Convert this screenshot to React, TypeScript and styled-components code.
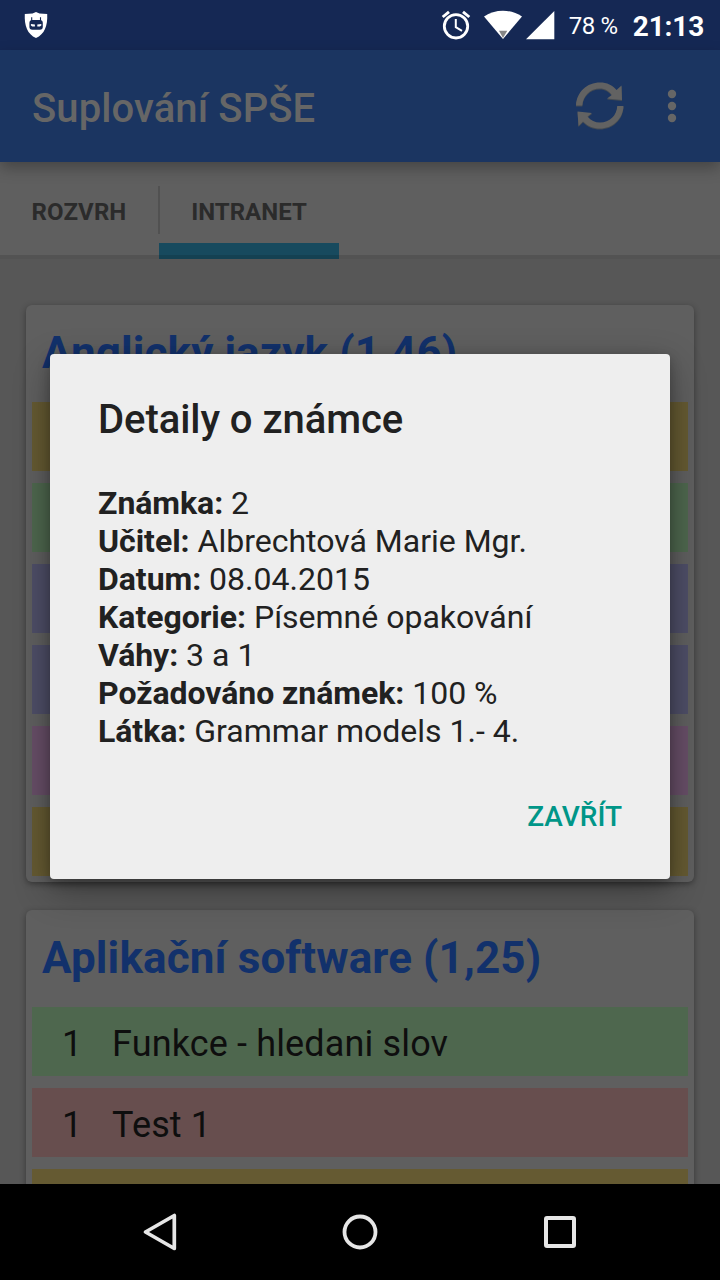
import React from "react";
import styled, { createGlobalStyle } from "styled-components";

const GlobalStyle = createGlobalStyle`
  * { box-sizing: border-box; }
  body { margin: 0; background: #000; font-family: Roboto, sans-serif; }
`;

const Screen = styled.div`
  position: relative;
  display: flex;
  flex-direction: column;
  width: 720px;
  height: 1280px;
  overflow: hidden;
  background: #575757;
`;

const StatusBar = styled.header`
  display: flex;
  align-items: center;
  height: 50px;
  flex: none;
  padding: 0 16px 0 24px;
  background: #152854;
  color: #fff;
`;

const StatusIcons = styled.div`
  display: flex;
  margin-left: auto;
  margin-right: 14px;
  svg { display: block; }
`;

const Battery = styled.span`
  font-size: 24px;
  line-height: 50px;
  padding-top: 2px;
  margin-right: 15px;
  letter-spacing: -0.35px;
  white-space: nowrap;
`;

const Clock = styled.span`
  font-size: 28px;
  font-weight: 700;
  line-height: 50px;
  padding-top: 3px;
  letter-spacing: -0.2px;
`;

const AppBar = styled.div`
  position: relative;
  display: flex;
  align-items: center;
  height: 112px;
  flex: none;
  padding: 0 32px;
  background: #1b3561;
  box-shadow: 0 6px 14px rgba(0, 0, 0, 0.28);
  z-index: 1;
  svg { display: block; }
`;

const AppTitle = styled.h1`
  flex: 1;
  margin: 6px 0 0;
  font-size: 40px;
  font-weight: 500;
  line-height: 48px;
  letter-spacing: 0.1px;
  color: #666;
`;

const TabBar = styled.nav`
  display: flex;
  height: 97px;
  flex: none;
  background: linear-gradient(#5f5f5f 93px, #535353 93px);
`;

const Tab = styled.div<{ $active?: boolean }>`
  display: flex;
  align-items: center;
  justify-content: center;
  width: ${(p) => (p.$active ? "180px" : "158px")};
  padding-top: 3px;
  font-size: 24px;
  font-weight: 700;
  letter-spacing: ${(p) => (p.$active ? "0" : "0.1px")};
  color: #2b2b2b;
  margin-left: ${(p) => (p.$active ? "-1px" : "0")};
  background: ${(p) =>
    p.$active
      ? "linear-gradient(transparent 81px, #174a5e 81px, #174a5e 93px, #144152 93px)"
      : "none"};
`;

const TabDivider = styled.div`
  width: 2px;
  height: 48px;
  margin-top: 24px;
  background: #515151;
`;

const Content = styled.main`
  display: flex;
  flex-direction: column;
  gap: 28px;
  flex: 1;
  min-height: 0;
  overflow: hidden;
  padding: 46px 26px 0;
`;

const Card = styled.section`
  display: flex;
  flex-direction: column;
  flex: none;
  gap: 12px;
  padding: 0 6px 6px;
  border-radius: 6px;
  background: #5f5f5f;
  box-shadow: 0 2px 6px rgba(0, 0, 0, 0.38);
`;

const CardTitle = styled.h2`
  height: 85px;
  margin: 0;
  padding: 0 10px;
  font-size: 44px;
  font-weight: 700;
  line-height: 96px;
  letter-spacing: 0.12px;
  white-space: nowrap;
  color: #12316b;
`;

const rowColors = {
  yellow: "#655a32",
  green: "#4e674e",
  blue: "#4e4e67",
  pink: "#674e67",
  red: "#674e4e",
};

const GradeRow = styled.div<{ $tone: keyof typeof rowColors }>`
  display: flex;
  align-items: center;
  height: 69px;
  padding: 4px 30px 0;
  background: ${(p) => rowColors[p.$tone]};
  font-size: 36px;
  line-height: 44px;
  letter-spacing: 0.15px;
  color: #0e0e0e;
`;

const Grade = styled.span`
  width: 50px;
`;

const NavBar = styled.footer`
  display: flex;
  flex: none;
  justify-content: center;
  gap: 104px;
  height: 96px;
  background: #000;
  svg { display: block; }
`;

const Dialog = styled.div`
  position: absolute;
  z-index: 2;
  left: 50px;
  top: 354px;
  display: flex;
  flex-direction: column;
  width: 620px;
  height: 525px;
  padding: 41px 48px;
  border-radius: 4px;
  background: #eee;
  color: #212121;
  box-shadow: 0 12px 36px rgba(0, 0, 0, 0.32), 0 4px 12px rgba(0, 0, 0, 0.26);
`;

const DialogTitle = styled.h2`
  margin: 0 0 39px;
  font-size: 40px;
  font-weight: 500;
  line-height: 50px;
  letter-spacing: -0.06px;
`;

const Details = styled.div`
  font-size: 32px;
  line-height: 38px;
  white-space: nowrap;
  b { letter-spacing: -0.04px; }
`;

const CloseButton = styled.button`
  align-self: flex-end;
  margin: 48px 0 0;
  padding: 0;
  border: 0;
  background: none;
  font: 500 28px/38px Roboto, sans-serif;
  color: #009688;
`;

const details = [
  ["Známka:", "2"],
  ["Učitel:", "Albrechtová Marie Mgr."],
  ["Datum:", "08.04.2015"],
  ["Kategorie:", "Písemné opakování"],
  ["Váhy:", "3 a 1"],
  ["Požadováno známek:", "100 %"],
  ["Látka:", "Grammar models 1.- 4."],
];

const firstCardRows: (keyof typeof rowColors)[] = [
  "yellow", "green", "blue", "blue", "pink", "yellow",
];

const ShieldIcon = () => (
  <svg width="24" height="28" viewBox="0 -1.8 24 28">
    <path d="M12 -0.7L15.5 .8 23.2 1.2C23.8 13 20.5 21.5 12 25.2 3.5 21.5 .2 13 .8 1.2L8.5 .8z" fill="#fff" />
    <path d="M7.7 4.4v4M16.5 4.4v4" stroke="#152854" strokeWidth="1.1" />
    <rect x="5.4" y="7.2" width="13.4" height="9.8" rx="3" fill="#152854" />
    <path d="M6.9 11.2l4 .4v2H8.3l-1.4-.8zM17.3 11.2l-4 .4v2h2.6l1.4-.8z" fill="#fff" />
  </svg>
);

const SignalIcons = () => (
  <svg width="114" height="50" viewBox="441 0 114 50">
    <g fill="none" stroke="#fff">
      <circle cx="456" cy="26.3" r="11.7" strokeWidth="2.8" />
      <path d="M442.7 17l6.3-5.2M469.3 17l-6.3-5.2" strokeWidth="2.9" />
      <path d="M455.8 19v8.2l6.2 3.6" strokeWidth="2" />
    </g>
    <path d="M484 16.5C495 8.8 511 8.8 522 16.5L503 39z" fill="#fff" />
    <path d="M499 30.7h8.3L503 38z" fill="#858585" />
    <path d="M554.3 11v28.3H526z" fill="#fff" />
  </svg>
);

const RefreshIcon = () => (
  <svg width="52" height="52" viewBox="574 80 52 52">
    <defs>
      <path id="refresh-top" d="M576 105.5C576.5 92 587 82.5 600 82.5C607 82.5 612.5 85 616.5 90L621.5 85.5L622 100L607 98.5L611.8 95C609 91 605 88.5 600 88.5C590 88.5 583 96 582.3 105.5Z" />
      <path id="refresh-bottom" d="M623.5 106C623 119.5 612 128.5 600 128.5C593 128.5 587.5 126 583 121.5L578.5 126L577.5 111.5L592 113L587.5 116.5C591 120.5 595 122.5 600 122.5C609.5 122.5 617 115.5 617.2 106Z" />
    </defs>
    <g fill="#444b52">
      <use href="#refresh-top" y="0.9" />
      <use href="#refresh-bottom" y="0.9" />
    </g>
    <g fill="#626262">
      <use href="#refresh-top" />
      <use href="#refresh-bottom" />
    </g>
  </svg>
);

const MoreIcon = () => (
  <svg width="62" height="52" viewBox="626 80 62 52" fill="#666">
    <circle cx="672" cy="94" r="4.2" />
    <circle cx="672" cy="106" r="4.2" />
    <circle cx="672" cy="118" r="4.2" />
  </svg>
);

export default function App() {
  return (
    <Screen>
      <GlobalStyle />
      <StatusBar>
        <ShieldIcon />
        <StatusIcons><SignalIcons /></StatusIcons>
        <Battery>78 %</Battery>
        <Clock>21:13</Clock>
      </StatusBar>
      <AppBar>
        <AppTitle>Suplování SPŠE</AppTitle>
        <RefreshIcon />
        <MoreIcon />
      </AppBar>
      <TabBar>
        <Tab>ROZVRH</Tab>
        <TabDivider />
        <Tab $active>INTRANET</Tab>
      </TabBar>
      <Content>
        <Card>
          <CardTitle>Anglický jazyk (1,46)</CardTitle>
          {firstCardRows.map((tone, i) => <GradeRow key={i} $tone={tone} />)}
        </Card>
        <Card>
          <CardTitle>Aplikační software (1,25)</CardTitle>
          <GradeRow $tone="green"><Grade>1</Grade>Funkce - hledani slov</GradeRow>
          <GradeRow $tone="red"><Grade>1</Grade>Test 1</GradeRow>
          <GradeRow $tone="yellow" />
        </Card>
      </Content>
      <NavBar>
        <svg width="96" height="96" viewBox="112 1184 96 96">
          <path d="M145.5 1232L174.3 1215.5V1248.5Z" fill="none" stroke="#e6e6e6" strokeWidth="3.7" strokeLinejoin="round" />
        </svg>
        <svg width="96" height="96" viewBox="312 1184 96 96">
          <circle cx="360" cy="1232" r="15.5" fill="none" stroke="#e6e6e6" strokeWidth="3.8" />
        </svg>
        <svg width="96" height="96" viewBox="512 1184 96 96">
          <rect x="546" y="1218" width="28" height="28" rx="1" fill="none" stroke="#e6e6e6" strokeWidth="4" />
        </svg>
      </NavBar>
      <Dialog role="dialog">
        <DialogTitle>Detaily o známce</DialogTitle>
        <Details>
          {details.map(([label, value]) => (
            <div key={label}><b>{label}</b> {value}</div>
          ))}
        </Details>
        <CloseButton>ZAVŘÍT</CloseButton>
      </Dialog>
    </Screen>
  );
}
